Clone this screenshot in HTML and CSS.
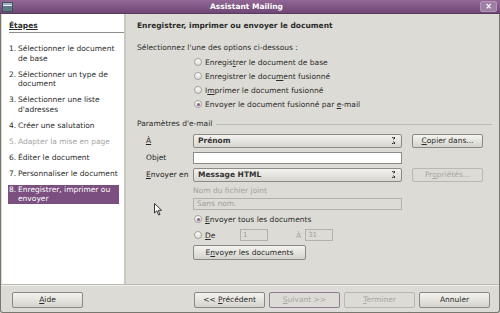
FILE: index.html
```html
<!DOCTYPE html>
<html lang="fr">
  <head>
    <meta charset="UTF-8" />
    <title>Assistant Mailing</title>
    <link rel="stylesheet" href="styles.css">
  </head>
  <body>
    <div class="window">
      <div class="titlebar">
        <span class="app-icon"></span>
        <span class="title">Assistant Mailing</span>
        <span class="close">&#215;</span>
      </div>

      <div class="main">
        <div class="steps">
          <div class="steps-title"><u>Étapes</u></div>
          <ol class="step-list">
            <li><span class="num">1.</span><span>Sélectionner le document de base</span></li>
            <li><span class="num">2.</span><span>Sélectionner un type de document</span></li>
            <li><span class="num">3.</span><span>Sélectionner une liste d'adresses</span></li>
            <li><span class="num">4.</span><span>Créer une salutation</span></li>
            <li class="disabled"><span class="num">5.</span><span>Adapter la mise en page</span></li>
            <li><span class="num">6.</span><span>Éditer le document</span></li>
            <li><span class="num">7.</span><span>Personnaliser le document</span></li>
            <li class="active"><span class="num">8.</span><span>Enregistrer, imprimer ou envoyer</span></li>
          </ol>
        </div>

        <div class="content">
          <div class="page-title">Enregistrer, imprimer ou envoyer le document</div>
          <div class="intro">Sélectionnez l'une des options ci-dessous :</div>

          <div class="options">
            <label class="radio-row"><span class="radio"></span><span>Enregis<u>t</u>rer le document de base</span></label>
            <label class="radio-row"><span class="radio"></span><span>Enregistrer le docu<u>m</u>ent fusionné</span></label>
            <label class="radio-row"><span class="radio"></span><span>I<u>m</u>primer le document fusionné</span></label>
            <label class="radio-row"><span class="radio checked"></span><span>Envoyer le document fusionné par <u>e</u>-mail</span></label>
          </div>

          <div class="legend"><span>Paramètres d'e-mail</span><span class="legend-line"></span></div>

          <div class="mail-grid">
            <div class="label"><u>À</u></div>
            <div class="select">Prénom<span class="arrows"></span></div>
            <div class="button"><u>C</u>opier dans...</div>

            <div class="label">Objet</div>
            <div class="input"></div>
            <div></div>

            <div class="label"><u>E</u>nvoyer en</div>
            <div class="select">Message HTML<span class="arrows"></span></div>
            <div class="button disabled">Pr<u>o</u>priétés...</div>
          </div>

          <div class="attach">
            <div class="muted">Nom du fichier joint</div>
            <div class="input disabled wide">Sans nom.</div>
            <label class="radio-row"><span class="radio checked"></span><span><u>E</u>nvoyer tous les documents</span></label>
            <label class="radio-row range">
              <span class="radio"></span><span class="de"><u>D</u>e</span>
              <span class="input disabled small">1</span>
              <span class="muted to">À</span>
              <span class="input disabled small">31</span>
            </label>
            <div class="button send">E<u>n</u>voyer les documents</div>
          </div>

          <svg class="cursor" width="9" height="13" viewBox="0 0 9 13">
            <path d="M0.5 0.5 L0.5 10 L2.8 7.8 L4.6 12 L6 11.4 L4.3 7.3 L7.6 7.3 Z" fill="#fff" stroke="#222" stroke-width="0.9" stroke-linejoin="round"/>
          </svg>
        </div>
      </div>

      <div class="footer">
        <div class="button nav"><u>A</u>ide</div>
        <div class="nav-group">
          <div class="button nav">&lt;&lt; <u>P</u>récédent</div>
          <div class="button nav disabled focus"><u>S</u>uivant &gt;&gt;</div>
          <div class="button nav disabled"><u>T</u>erminer</div>
          <div class="button nav">Annuler</div>
        </div>
      </div>
    </div>
  </body>
</html>
```

FILE: styles.css
```css
body {
  margin: 0;
  font-family: "DejaVu Sans", sans-serif;
  font-size: 7.5px;
  color: #2b2b2b;
  background-color: #dcdbd5;
}
u {
  text-decoration: underline;
  text-underline-offset: 1px;
}
.window {
  width: 500px;
  height: 313px;
  box-sizing: border-box;
  display: flex;
  flex-direction: column;
  background-color: #dcdbd5;
  border: 1px solid #77766f;
  border-top: none;
  border-radius: 0 0 3px 3px;
}

/* title bar */
.titlebar {
  height: 13px;
  flex: none;
  display: flex;
  align-items: center;
  padding: 0 3px 0 2px;
  margin: 0 -1px;
  background: linear-gradient(#936896, #6f4774);
  border-bottom: 1px solid #5b3a60;
}
.app-icon {
  width: 9px;
  height: 8px;
  background: linear-gradient(#9fb2bb 0 30%, #e9eef0 30% 42%, #5f7a86 42%);
  border: 1px solid #3e5560;
}
.title {
  flex: 1;
  text-align: center;
  color: #fff;
  font-weight: bold;
}
.close {
  width: 15px;
  height: 9px;
  line-height: 9px;
  text-align: center;
  color: #fff;
  font-weight: bold;
  font-size: 8px;
  border-radius: 2px;
  background-color: #a07fa4;
  border: 1px solid #b497b8;
}

/* main area */
.main {
  flex: none;
  height: 270px;
  display: flex;
  padding-left: 1px;
  border-bottom: 1px solid #b9b8b1;
}
.steps {
  width: 110px;
  flex: none;
  background-color: #fff;
  padding: 7px 5px 0 7px;
  border-right: 2px solid #c8c7c0;
}
.steps-title {
  font-weight: bold;
  line-height: 10px;
  padding-bottom: 1px;
  border-bottom: 1px solid #8f8e88;
  margin-right: -5px;
}
.step-list {
  list-style: none;
  margin: 11px 0 0;
  padding: 0;
}
.step-list li {
  display: flex;
  line-height: 9.5px;
  margin-bottom: 6.5px;
}
.step-list .num {
  width: 9px;
  flex: none;
}
.step-list li.disabled {
  color: #a6a59f;
}
.step-list li.active {
  background-color: #7b5080;
  color: #fff;
  margin-left: -1px;
  padding-left: 1px;
}

.content {
  flex: 1;
  position: relative;
  padding: 7px 6px 0 11px;
}
.page-title {
  font-weight: bold;
  line-height: 10px;
}
.intro {
  line-height: 10px;
  margin-top: 12px;
}
.options {
  margin: 2px 0 0 56px;
}
.radio-row {
  display: flex;
  align-items: center;
  height: 14px;
}
.radio {
  width: 6px;
  height: 6px;
  flex: none;
  margin: 0 3px 0 1px;
  border-radius: 50%;
  border: 1px solid #a3a29c;
  background: linear-gradient(#fdfdfc, #dddcd6);
  display: flex;
  align-items: center;
  justify-content: center;
}
.radio.checked::after {
  content: "";
  width: 3px;
  height: 3px;
  border-radius: 50%;
  background-color: #8a5b8f;
}

.legend {
  display: flex;
  align-items: center;
  line-height: 10px;
  margin-top: 8px;
}
.legend-line {
  flex: 1;
  height: 1px;
  margin-left: 4px;
  margin-right: 1px;
  background-color: #bab9b2;
}

.mail-grid {
  display: grid;
  grid-template-columns: 37px 209px 71px;
  grid-auto-rows: 17px;
  column-gap: 10px;
  align-items: center;
  margin: 3px 0 0 9px;
}
.label {
  color: #1f1f1f;
  white-space: nowrap;
}
.select {
  height: 12px;
  display: flex;
  align-items: center;
  padding: 0 4px;
  border: 1px solid #8c8b85;
  border-radius: 2px;
  background: linear-gradient(#f3f2ee, #d7d6d0);
  font-weight: bold;
  color: #333;
}
.arrows {
  margin-left: auto;
  width: 3px;
  height: 7px;
  margin-right: 2px;
  background:
    linear-gradient(to top right, transparent 50%, #333 50%) 0 0 / 1.5px 3px no-repeat,
    linear-gradient(to top left, transparent 50%, #333 50%) 1.5px 0 / 1.5px 3px no-repeat,
    linear-gradient(to bottom right, transparent 50%, #333 50%) 0 4px / 1.5px 3px no-repeat,
    linear-gradient(to bottom left, transparent 50%, #333 50%) 1.5px 4px / 1.5px 3px no-repeat;
}
.input {
  height: 10px;
  line-height: 10px;
  padding: 0 3px;
  border: 1px solid #8c8b85;
  background-color: #fff;
}
.input.disabled {
  background-color: #dcdbd5;
  border-color: #b2b1ab;
  color: #a09f99;
}
.button {
  height: 12px;
  line-height: 12px;
  text-align: center;
  border: 1px solid #898882;
  border-radius: 2px;
  background: linear-gradient(#f4f3ef, #d4d3cc);
  color: #2b2b2b;
}
.button.disabled {
  background: #dcdbd5;
  border-color: #b8b7b0;
  color: #a8a7a1;
}
.muted {
  color: #a4a39d;
}

.attach {
  margin-left: 56px;
}
.attach .muted:first-child {
  line-height: 10px;
  margin-top: 3px;
}
.input.wide {
  width: 201px;
  margin-top: 2px;
}
.attach .radio-row {
  height: 16px;
}
.attach .radio-row:first-of-type {
  margin-top: 1px;
}
.de {
  width: 35px;
}
.input.small {
  width: 22px;
  padding: 0 2px;
  font-size: 7px;
}
.to {
  margin: 0 4px 0 28px;
}
.button.send {
  width: 111px;
  height: 13px;
  line-height: 13px;
  margin-top: 2px;
}
.cursor {
  position: absolute;
  left: 28px;
  top: 189px;
}

/* footer */
.footer {
  flex: 1;
  display: flex;
  align-items: flex-start;
  justify-content: space-between;
  padding: 6px 9px 0 11px;
  border-top: 1px solid #f2f1ec;
}
.nav-group {
  display: flex;
  gap: 4px;
}
.button.nav {
  width: 69px;
  height: 14px;
  line-height: 14px;
}
.button.focus {
  border-color: #8f7a94;
}
```
